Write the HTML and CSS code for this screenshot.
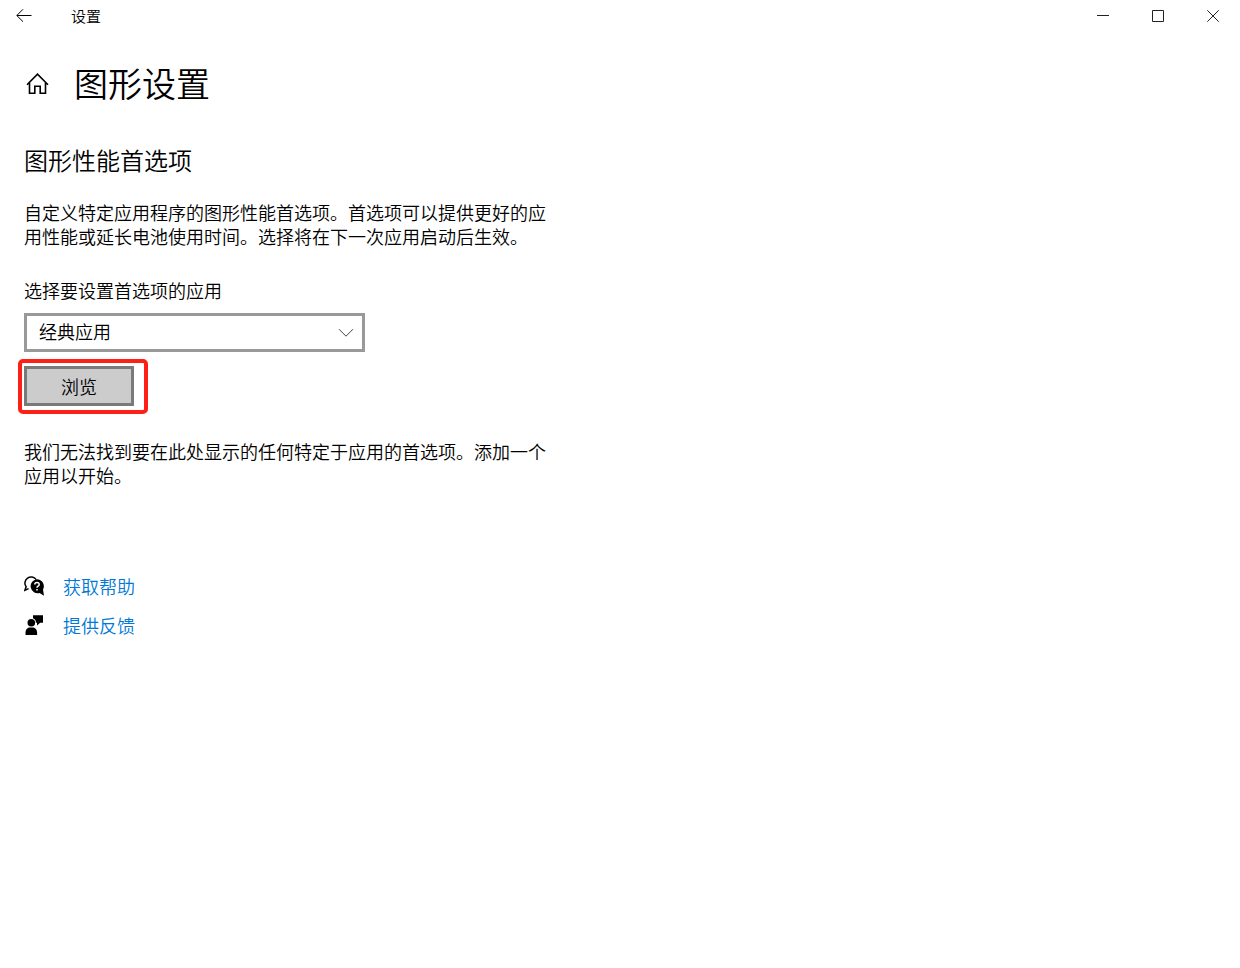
FILE: index.html
```html
<!DOCTYPE html>
<html lang="zh-CN">
<head>
  <meta charset="UTF-8">
  <meta name="viewport" content="width=device-width, initial-scale=1.0">
  <title>设置</title>
  <link rel="stylesheet" href="styles.css">
</head>
<body>
  <header class="titlebar">
    <button class="back" type="button" aria-label="返回">
      <svg width="16" height="14" viewBox="0 0 16 14"><path d="M15.5 6.5H1M7 .3.8 6.5 7 12.7"/></svg>
    </button>
    <span class="window-title">设置</span>
    <div class="window-controls">
      <button type="button" aria-label="最小化">
        <svg width="12" height="12" viewBox="0 0 12 12"><path d="M0 5.5h12"/></svg>
      </button>
      <button type="button" aria-label="最大化">
        <svg width="12" height="12" viewBox="0 0 12 12"><path d="M.5.5h11v11H.5z"/></svg>
      </button>
      <button type="button" aria-label="关闭">
        <svg width="12" height="12" viewBox="0 0 12 12"><path d="M.3.3l11.4 11.4M11.7.3.3 11.7"/></svg>
      </button>
    </div>
  </header>

  <main class="page">
    <div class="page-header">
      <button class="home" type="button" aria-label="主页">
        <svg width="24" height="22" viewBox="0 0 24 22"><path d="M1 12.7 11.5 2.2 22 12.7M3.5 10.5v10.7h5.3v-7h5.4v7h5.3V10.5"/></svg>
      </button>
      <h1>图形设置</h1>
    </div>

    <h2>图形性能首选项</h2>
    <p class="intro">自定义特定应用程序的图形性能首选项。首选项可以提供更好的应用性能或延长电池使用时间。选择将在下一次应用启动后生效。</p>

    <label class="field-label" for="app-type">选择要设置首选项的应用</label>
    <div class="select-box">
      <select id="app-type">
        <option>经典应用</option>
      </select>
      <svg class="chevron" width="16" height="10" viewBox="0 0 16 10"><path d="M1 1.2l7 7 7-7"/></svg>
    </div>

    <div class="browse">
      <button class="browse-button" type="button">浏览</button>
    </div>

    <p class="empty">我们无法找到要在此处显示的任何特定于应用的首选项。添加一个应用以开始。</p>

    <nav class="links">
      <a href="#">
        <svg width="20" height="20" viewBox="0 0 20 20">
          <path class="outline" d="M4.6 12.6.8 14.4l1.3-3.6A5.9 5.9 0 1 1 12.2 3.6"/>
          <path d="M12.9 3.2a7 7 0 0 1 6.1 10.4l1 6.2-4.4-2.7A7.1 7.1 0 1 1 12.9 3.2z"/>
          <path class="mark" d="M10.8 8.5c0-2.8 4.4-2.8 4.4-.1 0 1.7-2.2 1.7-2.2 3.4M13 12.9v1.5"/>
        </svg>
        <span>获取帮助</span>
      </a>
      <a href="#">
        <svg width="20" height="20" viewBox="0 0 20 20">
          <circle cx="7.3" cy="7.8" r="3.8"/>
          <path d="M1.5 20v-2.4c0-2.9 1.8-5.2 4.2-5.2h3.2c2.4 0 4.2 2.3 4.2 5.2V20z"/>
          <path d="M9 .3h10v7.5h-2.8L13 10.4V7.8h-1.1C11.9 5.2 10.9 4 9 3.3z"/>
        </svg>
        <span>提供反馈</span>
      </a>
    </nav>
  </main>
</body>
</html>
```
FILE: styles.css
```css
* {
  box-sizing: border-box;
}

body {
  margin: 0;
  font-family: "Noto Sans CJK SC", sans-serif;
  font-size: 18px;
  line-height: 24px;
  font-weight: 350;
  background: #fff;
  color: #000;
}

button,
select {
  font: inherit;
  color: inherit;
  padding: 0;
  border: none;
  background: none;
}

svg {
  display: block;
  fill: none;
  stroke: #000;
}

/* Title bar */
.titlebar {
  display: flex;
  align-items: center;
  height: 31px;
}

.back {
  display: flex;
  justify-content: center;
  width: 48px;
}

.window-title {
  margin-left: 23px;
  font-size: 15px;
}

.window-controls {
  display: flex;
  margin-left: auto;
}

.window-controls button {
  display: flex;
  align-items: center;
  justify-content: center;
  width: 55px;
  height: 31px;
}

.window-controls svg {
  stroke: #222;
}

/* Page */
.page {
  padding: 28px 24px;
}

.page-header {
  display: flex;
  align-items: center;
  gap: 24px;
  height: 48px;
}

.home {
  margin-left: 2px;
}

.home svg {
  stroke-width: 1.6;
}

h1,
h2,
p {
  margin: 0;
  font-weight: inherit;
}

h1 {
  font-size: 34px;
  line-height: 48px;
}

h2 {
  margin-top: 37px;
  font-size: 24px;
  line-height: 32px;
}

.intro,
.empty {
  max-width: 536px;
}

.intro {
  margin-top: 24px;
}

.field-label {
  display: block;
  margin-top: 30px;
}

.select-box {
  position: relative;
  max-width: 341px;
  margin-top: 11px;
}

.select-box select {
  display: block;
  width: 100%;
  height: 39px;
  padding: 0 40px 4px 12px;
  border: 3px solid #999;
  border-radius: 0;
  background: #fff;
  appearance: none;
}

.chevron {
  position: absolute;
  top: 15px;
  right: 11px;
  stroke: #444;
  pointer-events: none;
}

.browse {
  position: relative;
  width: fit-content;
  margin-top: 14px;
}

/* Red frame drawn over the button */
.browse::after {
  content: "";
  position: absolute;
  inset: -7px -14px -8px -6px;
  border: 4px solid #ff2015;
  border-radius: 5px;
  pointer-events: none;
}

.browse-button {
  display: block;
  width: 110px;
  height: 40px;
  border: 3px solid #7a7a7a;
  background: #ccc;
}

.empty {
  margin-top: 33px;
}

/* Help links */
.links {
  display: flex;
  flex-direction: column;
  align-items: flex-start;
  gap: 15px;
  margin-top: 87px;
}

.links a {
  display: flex;
  align-items: center;
  gap: 19px;
  color: #0078d7;
  text-decoration: none;
}

.links svg {
  fill: #000;
  stroke: none;
}

.links .outline {
  fill: none;
  stroke: #000;
  stroke-width: 1.5;
}

.links .mark {
  fill: none;
  stroke: #fff;
  stroke-width: 1.5;
}
```
